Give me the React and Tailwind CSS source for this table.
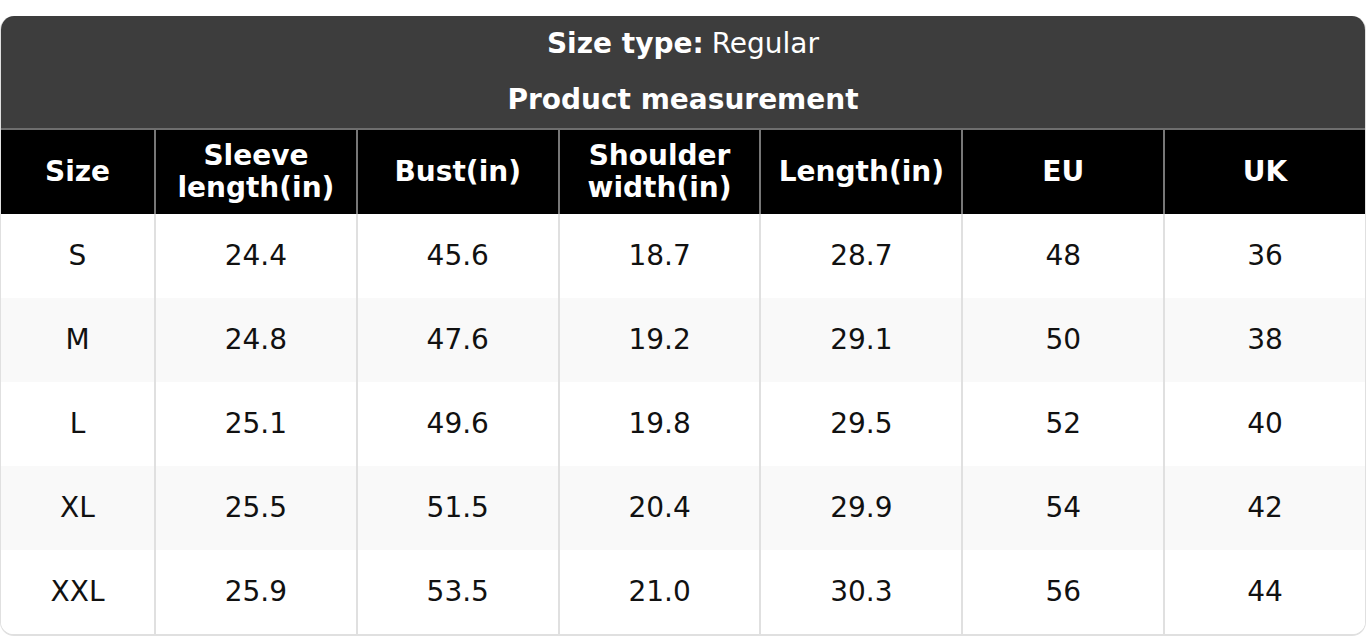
const headers = ["Size", "Sleeve length(in)", "Bust(in)", "Shoulder width(in)", "Length(in)", "EU", "UK"];

const rows = [
  ["S", "24.4", "45.6", "18.7", "28.7", "48", "36"],
  ["M", "24.8", "47.6", "19.2", "29.1", "50", "38"],
  ["L", "25.1", "49.6", "19.8", "29.5", "52", "40"],
  ["XL", "25.5", "51.5", "20.4", "29.9", "54", "42"],
  ["XXL", "25.9", "53.5", "21.0", "30.3", "56", "44"],
];

export default function App() {
  return (
    <div
      className="bg-white pt-4 text-[28px]"
      style={{ fontFamily: '"DejaVu Sans", "Liberation Sans", sans-serif' }}
    >
      <div className="overflow-hidden rounded-[14px] border-x border-b-2 border-[#e0e0e0]">
        {/* ===== title block ===== */}
        <div className="bg-[#3d3d3d] text-white">
          <div className="flex h-[56px] items-center justify-center">
            <span className="font-bold">Size type:</span>
            <span className="ml-2">Regular</span>
          </div>
          <div className="flex h-[56px] items-center justify-center font-bold">
            Product measurement
          </div>
        </div>

        {/* ===== table head ===== */}
        <div className="grid grid-cols-[153px_repeat(6,1fr)] border-t-2 border-[#6e6e6e] bg-black text-white">
          {headers.map((h, i) => (
            <div
              key={h}
              className={
                "flex h-[84px] items-center justify-center px-3 text-center font-bold leading-[32px] " +
                (i > 0 ? "border-l-2 border-[#777777]" : "")
              }
            >
              {h}
            </div>
          ))}
        </div>

        {/* ===== body ===== */}
        {rows.map((r, ri) => (
          <div
            key={r[0]}
            className={
              "grid grid-cols-[153px_repeat(6,1fr)] text-[#111] " +
              (ri % 2 === 1 ? "bg-[#f9f9f9]" : "bg-white")
            }
          >
            {r.map((v, i) => (
              <div
                key={i}
                className={
                  "flex h-[84px] items-center justify-center " +
                  (i > 0 ? "border-l-2 border-[#e0e0e0]" : "")
                }
              >
                {v}
              </div>
            ))}
          </div>
        ))}
      </div>
    </div>
  );
}
